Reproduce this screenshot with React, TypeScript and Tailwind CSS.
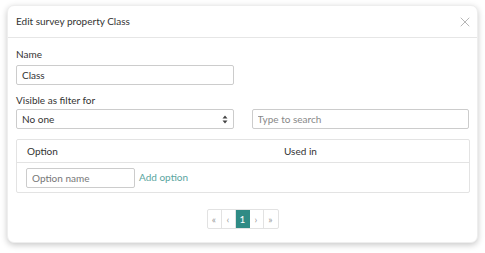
import { X } from "lucide-react";

export default function App() {
  return (
    <div className="w-[485px] h-[253px] bg-white pt-[5px] px-[7px] font-['Lato',sans-serif] text-[#333]">
      <div className="rounded-[7px] bg-white shadow-[0_2px_6px_rgba(0,0,0,0.22)] border border-[#eee] h-[238px] flex flex-col">
        {/* Header */}
        <div className="flex items-center justify-between h-[32px] pl-[8px] pr-[4px] border-b border-[#e6e6e6]">
          <h3 className="text-[10px]">Edit survey property Class</h3>
          <X className="h-[16px] w-[16px] text-[#aaa]" strokeWidth={1.3} />
        </div>

        <div className="px-[8px] pt-[9px]">
          <label className="block text-[10px] leading-[14px]">Name</label>
          <input
            className="mt-[4px] w-[218px] h-[20px] border border-[#ccc] rounded-[2px] px-[5px] text-[10px] outline-none"
            defaultValue="Class"
          />

          <label className="block mt-[8px] text-[10px] leading-[14px]">Visible as filter for</label>
          <div className="mt-[2px] flex gap-[18px]">
            <div className="w-[218px] h-[20px] border border-[#ccc] rounded-[2px] px-[5px] flex items-center justify-between text-[10px]">
              <span>No one</span>
              <svg width="6" height="9" viewBox="0 0 6 9" className="text-[#444]">
                <path d="M3 0.5 L5.5 3.5 H0.5 Z M3 8.5 L5.5 5.5 H0.5 Z" fill="currentColor" />
              </svg>
            </div>
            <input
              className="w-[218px] h-[20px] border border-[#ccc] rounded-[2px] px-[5px] text-[10px] placeholder-[#888] outline-none"
              placeholder="Type to search"
            />
          </div>

          {/* Table */}
          <div className="mt-[10px] w-[454px] border border-[#e3e3e3] rounded-[2px]">
            <div className="grid grid-cols-[257px_1fr] h-[23px] items-center border-b border-[#e3e3e3] text-[10px]">
              <span className="pl-[10px]">Option</span>
              <span className="pl-[10px]">Used in</span>
            </div>
            <div className="flex items-center gap-[4px] h-[29px] px-[9px]">
              <input
                className="w-[109px] h-[20px] border border-[#ccc] rounded-[2px] px-[5px] text-[10px] placeholder-[#777] outline-none"
                placeholder="Option name"
              />
              <span className="text-[10px] text-[#5aa5a0]">Add option</span>
            </div>
          </div>

          {/* Pagination */}
          <div className="mt-[16px] flex justify-center">
            <div className="flex h-[20px] border border-[#e2e2e2] rounded-[2px] text-[10px] text-[#999]">
              <span className="w-[14px] flex items-center justify-center border-r border-[#e2e2e2]">«</span>
              <span className="w-[14px] flex items-center justify-center border-r border-[#e2e2e2]">‹</span>
              <span className="w-[14px] flex items-center justify-center bg-[#2f8b85] text-white">1</span>
              <span className="w-[14px] flex items-center justify-center border-r border-[#e2e2e2]">›</span>
              <span className="w-[14px] flex items-center justify-center">»</span>
            </div>
          </div>
        </div>
      </div>
    </div>
  );
}
